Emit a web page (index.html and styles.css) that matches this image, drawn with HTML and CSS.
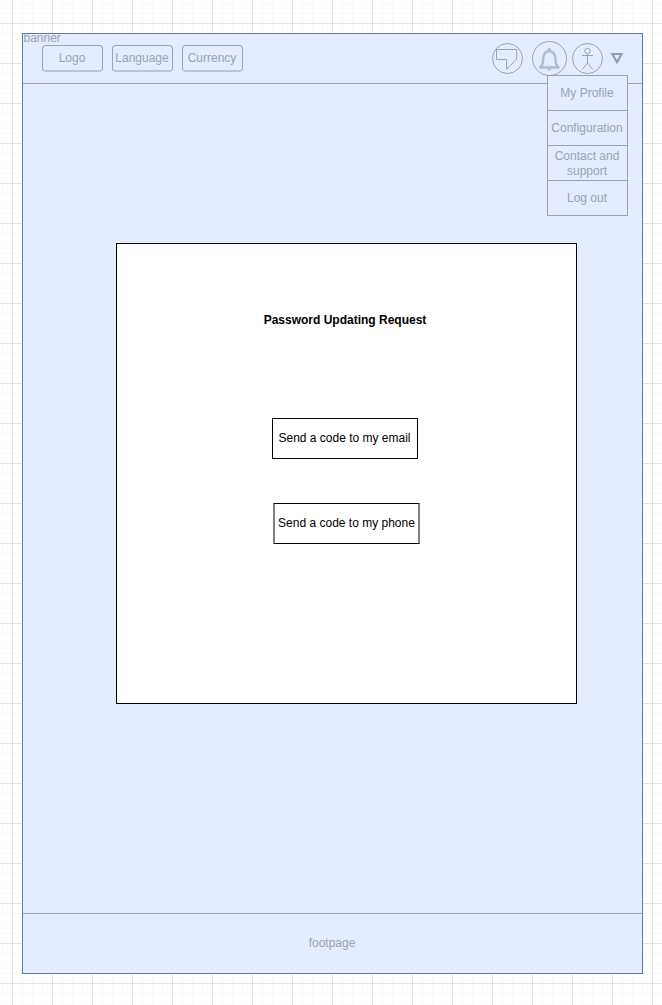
FILE: index.html
```html
<!DOCTYPE html>
<html lang="en">
<head>
<meta charset="utf-8">
<title>Password Updating Request</title>
<link rel="stylesheet" href="styles.css">
</head>
<body>
<div class="page">
  <header class="banner">
    <span class="banner-label">banner</span>
    <nav class="tabs">
      <span class="tab">Logo</span>
      <span class="tab">Language</span>
      <span class="tab">Currency</span>
    </nav>
    <svg class="icons" width="136" height="38" viewBox="490 40 136 38">
      <circle cx="507.5" cy="58.5" r="15"/>
      <path d="M496.5 49.5H516.7V59L506.6 69.3V59.5H496.5Z"/>
      <circle cx="549.5" cy="58.5" r="17"/>
      <path class="bell" d="M540 67.5C542 66 543 64 543.1 60C543.2 54.5 545 51.2 549.3 51.1C553.6 51.2 555.4 54.5 555.5 60C555.6 64 556.6 66 558.6 67.5Z"/>
      <path class="bell-detail" d="M548 50.2Q549.3 47.6 550.6 50.2M547.5 69.2H551.1"/>
      <circle cx="587.5" cy="58.5" r="15"/>
      <circle cx="587.5" cy="51" r="2.7"/>
      <path d="M587.5 53.7V63M582 55.5H593M587.5 63L582.3 69.5M587.5 63L592.7 69.5"/>
      <path class="caret" d="M612.3 54H621.7L617 62.3Z"/>
    </svg>
    <ul class="menu">
      <li>My Profile</li>
      <li>Configuration</li>
      <li class="two-line">Contact and support</li>
      <li>Log out</li>
    </ul>
  </header>
  <main class="content">
    <section class="panel">
      <h1>Password Updating Request</h1>
      <div class="button">Send a code to my email</div>
      <div class="button phone">Send a code to my phone</div>
    </section>
  </main>
  <footer class="footer">footpage</footer>
</div>
</body>
</html>
```
FILE: styles.css
```css
* { box-sizing: border-box; }
body {
  margin: 0;
  padding: 33px 0 0 22px;
  height: 1005px;
  overflow: hidden;
  font: 12px/15px "Liberation Sans", Arial, sans-serif;
  background-color: #fff;
  background-image:
    linear-gradient(to right, #e4e4e4 1px, transparent 1px),
    linear-gradient(#e4e4e4 1px, transparent 1px),
    linear-gradient(to right, #f9f9f9 1px, transparent 1px),
    linear-gradient(#f9f9f9 1px, transparent 1px);
  background-size: 40px 40px, 40px 40px, 10px 10px, 10px 10px;
  background-position: 12px 23px, 12px 23px, 2px 3px, 2px 3px;
}
.page {
  width: 621px;
  height: 941px;
  display: flex;
  flex-direction: column;
  background: #e3edfd;
  border: 1px solid #607aa8;
  color: #9aa3b2;
}
.banner {
  position: relative;
  flex: 0 0 50px;
  border-bottom: 1px solid #98a3b7;
  display: flex;
  justify-content: space-between;
  align-items: flex-start;
  padding: 6px 16px 0 19px;
}
.banner-label { position: absolute; left: 0.5px; top: -3px; }
.tabs { display: flex; gap: 9px; padding-top: 5px; }
.tab {
  width: 61px;
  height: 27px;
  padding-right: 1px;
  border: 1px solid #98a3b7;
  border-bottom: 2px solid #b9c5d8;
  border-radius: 4px;
  display: flex;
  align-items: center;
  justify-content: center;
}
.icons { fill: none; stroke: #98a3b7; stroke-width: 1; }
.bell { stroke: #b1bccd; stroke-width: 2.4; stroke-linejoin: round; }
.bell-detail { stroke: #b1bccd; stroke-width: 2; }
.caret { stroke: #929cae; stroke-width: 2; }
.menu {
  position: absolute;
  left: 524px;
  top: 41px;
  width: 81px;
  margin: 0;
  padding: 0;
  list-style: none;
  background: #e3edfd;
  border: 1px solid #98a3b7;
}
.menu li {
  height: 35px;
  padding-right: 1px;
  border-bottom: 1px solid #98a3b7;
  display: flex;
  align-items: center;
  justify-content: center;
  text-align: center;
}
.menu .two-line { padding-top: 2px; }
.menu li:last-child { height: 34px; border-bottom: 0; }
.content { flex: 1; padding: 159px 0 0 93px; }
.panel {
  width: 461px;
  height: 461px;
  background: #fff;
  border: 1px solid #000;
  color: #000;
  display: flex;
  flex-direction: column;
  align-items: flex-start;
}
h1 { width: 456px; margin: 69px 0 90px; font-size: 12px; line-height: 15px; text-align: center; }
.button {
  width: 146px;
  height: 41px;
  margin: 0 0 44px 155px;
  padding-right: 1px;
  border: 1px solid #000;
  display: flex;
  align-items: center;
  justify-content: center;
}
.phone {
  width: 147px;
  margin-left: 156px;
  padding: 0;
  border-left: 2px solid #808080;
  border-right: 2px solid #808080;
  white-space: nowrap;
}
.footer {
  flex: 0 0 60px;
  padding-right: 1px;
  border-top: 1px solid #98a3b7;
  display: flex;
  align-items: center;
  justify-content: center;
}
```
